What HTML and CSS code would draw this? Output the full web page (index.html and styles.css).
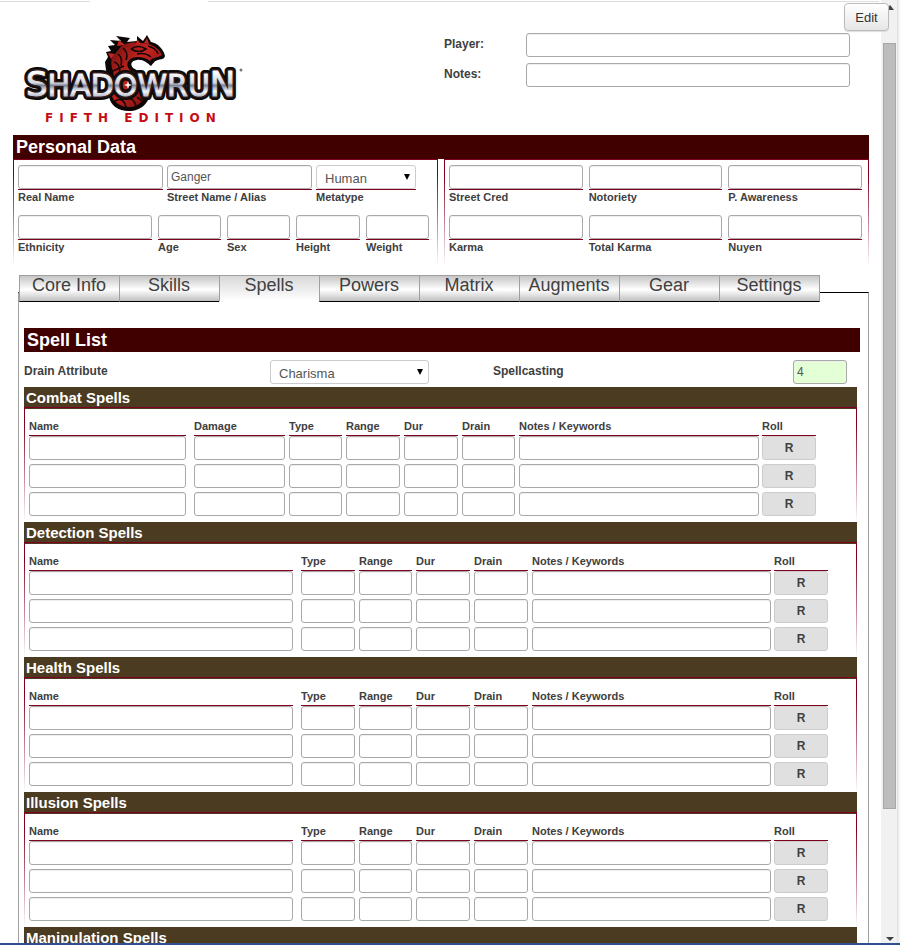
FILE: index.html
```html
<!DOCTYPE html>
<html lang="en">
<head>
<meta charset="utf-8">
<title>Shadowrun Fifth Edition – Character Sheet</title>
<link rel="stylesheet" href="styles.css">
</head>
<body>
<div class="window">
  <main class="viewport">
    <div class="topline"><span class="topline-left"></span><span class="topline-right"></span></div>
    <div class="sheet">
      <header class="header">
        <svg class="logo" viewBox="22 33 224 102" role="img" aria-label="Shadowrun Fifth Edition">
          <defs>
            <linearGradient id="chrome" gradientUnits="userSpaceOnUse" x1="0" y1="72" x2="0" y2="98">
              <stop offset="0" stop-color="#ffffff"/>
              <stop offset="0.42" stop-color="#d3d7e0"/>
              <stop offset="0.52" stop-color="#7f8699"/>
              <stop offset="0.62" stop-color="#b9bfcc"/>
              <stop offset="0.75" stop-color="#f4f6fa"/>
              <stop offset="1" stop-color="#a4aabb"/>
            </linearGradient>
            <linearGradient id="scales" x1="0" y1="0" x2="1" y2="1">
              <stop offset="0" stop-color="#6a1010"/>
              <stop offset="0.4" stop-color="#c4241e"/>
              <stop offset="1" stop-color="#6a0a0a"/>
            </linearGradient>
          </defs>
          <path fill="#0c0606" d="M106 70L105 62L108 57L106 52L111 51L108 46L115 45L110 40L121 41L116 36L130 38L127 42L137 41L137 36L143 41L147 35L151 42C158 43 164 50 165 56C164 60 160 59 158 60C154 61 153 64 151 66C147 63 143 59 137 60C131 61 130 64 133 68C140 72 149 78 150 91C150 103 141 111 129 111C118 111 110 105 109 96L109 82Z"/>
          <path fill="url(#scales)" d="M119 49C124 42 134 42 141 43C151 43 159 48 162 55C157 58 152 57 150 61C145 57 138 56 132 58C126 61 126 67 131 71C141 75 146 81 146 91C145 101 138 107 129 107C120 107 114 102 112 96L113 80C116 73 109 66 112 58Z"/>
          <path fill="none" stroke="#160606" stroke-width="1.6" d="M131 49Q138 44 146 49Q139 54 131 49M148 46Q156 48 158 54M123 48Q129 53 126 60M118 54Q123 58 121 66M114 62Q120 63 120 74M137 54Q145 52 151 57M113 71L124 66M116 77L130 72M115 101Q123 96 126 107M127 98Q134 98 136 106M137 97L143 102"/>
          <path fill="#c4241e" d="M119 40L125 45L117 46ZM137 39L141 44L136 45ZM147 38L149 44L144 43ZM108 53L115 54L111 59Z"/>
          <g class="logo-name" stroke-linejoin="round">
            <text x="26" y="96" fill="#0d0a0a" stroke="#0d0a0a" stroke-width="8"><tspan class="logo-cap">S</tspan>HADOWRU<tspan class="logo-cap">N</tspan></text>
            <text x="26" y="96" fill="#1c1214" stroke="#2e1a1c" stroke-width="4"><tspan class="logo-cap">S</tspan>HADOWRU<tspan class="logo-cap">N</tspan></text>
            <text x="26" y="96" fill="url(#chrome)" stroke="url(#chrome)" stroke-width="1"><tspan class="logo-cap">S</tspan>HADOWRU<tspan class="logo-cap">N</tspan></text>
          </g>
          <path fill="#fff" d="M128 81L129 84L132 85L129 86L128 89L127 86L124 85L127 84Z"/>
          <circle cx="241" cy="70" r="1.5" fill="#777"/>
          <text class="logo-sub" x="45" y="122">FIFTH EDITION</text>
        </svg>
        <div class="meta">
          <label for="player">Player:</label><input id="player" type="text">
          <label for="notes">Notes:</label><input id="notes" type="text">
        </div>
      </header>

      <section>
        <h2 class="bar">Personal Data</h2>
        <div class="personal">
          <div class="panel">
            <div class="row row-names">
              <div class="field"><input id="real" type="text"><label for="real">Real Name</label></div>
              <div class="field"><input id="alias" type="text" value="Ganger"><label for="alias">Street Name / Alias</label></div>
              <div class="field"><span class="drop"><select id="metatype"><option>Human</option></select></span><label for="metatype">Metatype</label></div>
            </div>
            <div class="row row-body">
              <div class="field"><input id="ethnicity" type="text"><label for="ethnicity">Ethnicity</label></div>
              <div class="field"><input id="age" type="text"><label for="age">Age</label></div>
              <div class="field"><input id="sex" type="text"><label for="sex">Sex</label></div>
              <div class="field"><input id="height" type="text"><label for="height">Height</label></div>
              <div class="field"><input id="weight" type="text"><label for="weight">Weight</label></div>
            </div>
          </div>
          <div class="panel">
            <div class="row row-thirds">
              <div class="field"><input id="cred" type="text"><label for="cred">Street Cred</label></div>
              <div class="field"><input id="notoriety" type="text"><label for="notoriety">Notoriety</label></div>
              <div class="field"><input id="awareness" type="text"><label for="awareness">P. Awareness</label></div>
            </div>
            <div class="row row-thirds">
              <div class="field"><input id="karma" type="text"><label for="karma">Karma</label></div>
              <div class="field"><input id="total" type="text"><label for="total">Total Karma</label></div>
              <div class="field"><input id="nuyen" type="text"><label for="nuyen">Nuyen</label></div>
            </div>
          </div>
        </div>
      </section>

      <nav class="tabs">
        <button type="button">Core Info</button>
        <button type="button">Skills</button>
        <button type="button" class="active">Spells</button>
        <button type="button">Powers</button>
        <button type="button">Matrix</button>
        <button type="button">Augments</button>
        <button type="button">Gear</button>
        <button type="button">Settings</button>
      </nav>

      <section class="tab-body">
        <h2 class="bar">Spell List</h2>
        <div class="drain">
          <label for="drain">Drain Attribute</label>
          <span class="drop"><select id="drain"><option>Charisma</option></select></span>
          <label for="casting">Spellcasting</label>
          <input id="casting" class="computed" type="text" value="4">
        </div>
        <div id="spells"></div>
      </section>
    </div>
  </main>
  <div class="scrollbar" aria-hidden="true">
    <span class="arrow up"></span>
    <span class="thumb"></span>
    <span class="arrow down"></span>
  </div>
  <button type="button" class="edit">Edit</button>
</div>
<script src="spells.js"></script>
</body>
</html>
```
FILE: spells.js
```js
const groups = ["Combat", "Detection", "Health", "Illusion", "Manipulation"];
const host = document.getElementById("spells");

for (const group of groups) {
  const combat = group === "Combat";
  const columns = [
    ["Name", combat ? "name" : "name-wide"],
    ...(combat ? [["Damage", "damage"]] : []),
    ["Type", combat ? "narrow" : "small"],
    ["Range", combat ? "small" : "narrow"],
    ["Dur", "small"],
    ["Drain", combat ? "narrow" : "small"],
    ["Notes / Keywords", "notes"],
    ["Roll", "roll"],
  ];
  const cell = ([label, kind]) =>
    kind === "roll"
      ? `<td class="roll"><button type="button">R</button></td>`
      : `<td class="${kind}"><input type="text" aria-label="${group} ${label}"></td>`;
  const row = `<tr>${columns.map(cell).join("")}</tr>`;
  host.insertAdjacentHTML("beforeend", `
    <section class="spells">
      <h3>${group} Spells</h3>
      <div class="spell-panel ${combat ? "combat" : ""}">
        <table>
          <thead><tr>${columns.map(([label, kind]) => `<th class="${kind}"><span>${label}</span></th>`).join("")}</tr></thead>
          <tbody>${row.repeat(3)}</tbody>
        </table>
      </div>
    </section>`);
}
```
FILE: styles.css
```css
* { box-sizing: border-box; }

body {
  margin: 0;
  background: #fff;
  color: #404040;
  font: 11px/15px "Liberation Sans", Arial, sans-serif;
}

h2, h3 { margin: 0; color: #fff; }
label { font-weight: bold; }

input, select {
  display: block;
  width: 100%;
  height: 24px;
  margin: 0;
  padding: 0 3px;
  border: 1px solid #a9a9a9;
  border-radius: 3px;
  background: #fff;
  box-shadow: inset 0 1px 1px #eee;
  color: #555;
  font: 12px "Liberation Sans", Arial, sans-serif;
}

.window {
  position: relative;
  display: flex;
  height: 100vh;
  overflow: hidden;
  border-bottom: 2px solid #2f4f8f;
}

.viewport { flex: 1; min-width: 0; overflow-x: hidden; overflow-y: auto; scrollbar-width: none; }
.sheet { padding: 0 12px 0 13px; }

.topline { display: flex; justify-content: space-between; height: 2px; padding-right: 2px; }
.topline span { border-bottom: 1px solid #ddd; }
.topline-left { width: 90px; }
.topline-right { flex: 1; margin-left: 118px; }

.header {
  display: grid;
  grid-template-columns: 431fr 425fr;
  padding-top: 31px;
}
.logo { display: block; width: 224px; height: 102px; margin-left: 9px; }
.logo-name { font: 30px "DejaVu Sans", sans-serif; }
.logo-cap { font-size: 34px; }
.logo-sub { font: bold 12px "DejaVu Sans", sans-serif; letter-spacing: 6px; fill: #c40d12; }
.meta {
  display: grid;
  grid-template-columns: 82px 1fr;
  align-content: start;
  gap: 6px 0;
  padding-right: 19px;
  font-size: 12px;
  line-height: 22px;
}

.bar { height: 24px; padding-left: 3px; background: #400000; font-size: 18px; line-height: 24px; }

.personal { display: grid; grid-template-columns: 1fr 1fr; gap: 6px; }
.panel {
  padding: 5px 6px 0 4px;
  border: 1px solid #80001f;
  border-bottom: 0;
  border-image: linear-gradient(#80001f, #80001f 15%, #fff) 1;
}
.panel:first-child { padding-right: 8px; }
.row { display: grid; margin-bottom: 10px; }
.row-names { grid-template-columns: 145fr 145fr 100fr 9fr; gap: 4px; }
.row-body { grid-template-columns: 134fr 63fr 63fr 64fr 63fr; gap: 6px; }
.row-thirds { grid-template-columns: 1fr 1fr 1fr; gap: 6px; }
.field label { display: block; height: 16px; border-top: 1px solid #80001f; }

.drop { position: relative; display: block; }
.drop::after {
  content: "";
  position: absolute;
  top: 9px;
  right: 6px;
  border: 3px solid transparent;
  border-top: 6px solid #000;
  border-bottom: 0;
  pointer-events: none;
}
select { appearance: none; padding: 2px 8px 0; border-color: #ccc; box-shadow: none; font-size: 13px; }

.tabs { position: relative; display: flex; margin: 10px 49px 0 6px; }
.tabs button {
  flex: 1 1 0;
  height: 27px;
  padding: 0 1px 8px 0;
  border: 0 solid #a0a0a0;
  border-width: 1px 0 1px 1px;
  border-bottom-color: #000;
  background: linear-gradient(#c6c6c6, #fff 55%, #c0c0c0);
  color: #404040;
  font: 18px/18px "Liberation Sans", Arial, sans-serif;
}
.tabs button:last-child { border-right-width: 1px; }
.tabs .active { border-bottom-color: #fff; background: linear-gradient(#d8d8d8, #fff); }

.tab-body {
  margin: -10px 0 0 5px;
  padding: 35px 8px 0 5px;
  border: 1px solid #a0a0a0;
  border-top-color: #000;
}
.drain {
  display: grid;
  grid-template-columns: 246fr 223fr 300fr 67fr;
  padding: 8px 0 3px;
  font-size: 12px;
  line-height: 22px;
}
.drain .drop { width: 159px; }
.drain .computed { width: 54px; background: #e4ffd6; }

.spells { margin-right: 3px; }
.spells h3 {
  height: 20px;
  padding-left: 2px;
  background: #4b3b20;
  font-size: 15px;
  line-height: 22px;
}
.spell-panel {
  padding: 0 28px 2px 4px;
  border: 1px solid #80001f;
  border-bottom: 0;
  border-image: linear-gradient(#80001f, #80001f 15%, #fff) 1;
  box-shadow: inset 0 1px #4b3b20;
}
.spell-panel.combat { padding-right: 40px; }

table { width: 100%; table-layout: fixed; border-collapse: collapse; }
th, td { padding: 0 4px 0 0; text-align: left; }
th { height: 28px; vertical-align: bottom; }
th span { display: block; height: 17px; border-bottom: 1px solid #80001f; line-height: 15px; }
td { height: 28px; vertical-align: top; }
.name { width: 165px; padding-right: 8px; }
.name-wide { width: 272px; padding-right: 8px; }
.damage { width: 95px; }
.small { width: 58px; }
.narrow { width: 57px; }
.notes { padding-right: 3px; }
.roll { width: 54px; padding-right: 0; }
.roll button {
  display: block;
  width: 100%;
  height: 24px;
  padding: 0;
  border: 1px solid #ccc;
  border-radius: 3px;
  background: #e0e0e0;
  color: #404040;
  font: bold 12px "Liberation Sans", Arial, sans-serif;
}

.scrollbar {
  display: flex;
  flex-direction: column;
  width: 19px;
  padding: 5px 4px 2px 2px;
  background: linear-gradient(to right, #f1f1f1 16px, #ddd 16px, #f4f4f4 18px);
}
.arrow { align-self: center; border: 4px solid transparent; }
.up { border-top: 0; border-bottom: 5px solid #404040; }
.down { border-bottom: 0; border-top: 4px solid #404040; }
.thumb { flex: 766; margin: 33px 0 128px; border: 1px solid #a8a8a8; background: #bcbcbc; }

.edit {
  position: absolute;
  top: 3px;
  right: 11px;
  width: 45px;
  height: 28px;
  padding: 0;
  border: 1px solid #bbb;
  border-radius: 4px;
  background: linear-gradient(#fff, #e6e6e6);
  box-shadow: 0 1px 1px #ddd;
  color: #333;
  font: 13px "Liberation Sans", Arial, sans-serif;
}
```
